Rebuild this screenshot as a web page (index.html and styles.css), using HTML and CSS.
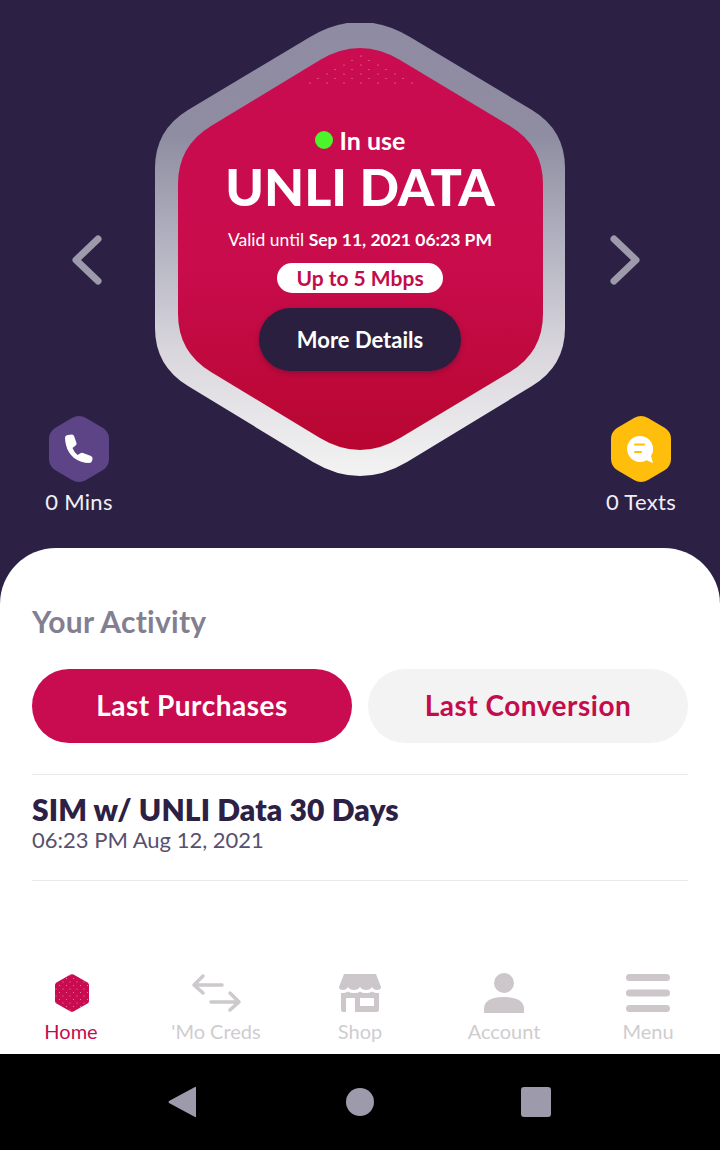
FILE: index.html
```html
<!DOCTYPE html>
<html lang="en">
<head>
<meta charset="utf-8">
<title>Home</title>
<link rel="stylesheet" href="styles.css">
</head>
<body>
<div class="phone">
  <section class="hero">
    <div class="side side-left">
      <svg class="chevron" viewBox="0 0 30 50" aria-hidden="true"><path d="M26 4 L4 25 L26 46"/></svg>
      <div class="stat">
        <svg class="stat-icon" viewBox="0 0 62 68" aria-hidden="true">
          <path class="hex-purple" d="M24 3 Q31 -1 38 3 L55 13 Q61 17 61 24 L61 44 Q61 51 55 55 L38 65 Q31 69 24 65 L7 55 Q1 51 1 44 L1 24 Q1 17 7 13 Z"/>
          <path class="glyph-white" d="M17 22 Q18 20 20 20 L24 19.500 Q25.500 19.500 26 21 L28.500 28 Q29 30 27 31 L24.500 33 Q26 37 29.500 40 L32 38.500 Q33.500 37.500 35 38 L43 41 Q45 42 44.500 44 L44 46 Q43.500 48 41 48 Q33 48 26 43 Q20 38 18 30 Q17 26 17 22 Z"/>
        </svg>
        <span class="stat-label">0 Mins</span>
      </div>
    </div>

    <div class="hex">
      <svg class="hex-art" viewBox="155 23 410 453" aria-hidden="true">
        <defs>
          <linearGradient id="rim" x1="0" y1="0" x2="0" y2="1">
            <stop offset="0" stop-color="#8f8ba4"/>
            <stop offset="0.25" stop-color="#8f8da1"/>
            <stop offset="0.5" stop-color="#b4b4c2"/>
            <stop offset="0.72" stop-color="#d8d6dc"/>
            <stop offset="1" stop-color="#f4f3f3"/>
          </linearGradient>
          <linearGradient id="core" x1="0" y1="0" x2="0" y2="1">
            <stop offset="0" stop-color="#ca0c50"/>
            <stop offset="0.55" stop-color="#c80c4c"/>
            <stop offset="1" stop-color="#b80630"/>
          </linearGradient>
          <pattern id="sparkle" width="17" height="9" patternUnits="userSpaceOnUse">
            <circle cx="4" cy="2" r="0.6" fill="#f4a0bd"/>
            <circle cx="12" cy="6.500" r="0.6" fill="#f08aae"/>
          </pattern>
        </defs>
        <path fill="url(#rim)" d="M310 37 Q360 7 410 37 L532 110 Q565 130 565 168 L565 328 Q565 366 532 386 L407 462 Q360 490 313 462 L188 386 Q155 366 155 328 L155 168 Q155 130 188 110 Z"/>
        <path fill="url(#core)" d="M320 60 Q360 36 400 60 L510 126 Q543 146 543 184 L543 314 Q543 352 510 372 L400 438 Q360 462 320 438 L211 372 Q178 352 178 314 L178 184 Q178 146 211 126 Z"/>
        <path fill="url(#sparkle)" d="M360 50 L420 86 L300 86 Z"/>
      </svg>
      <div class="hex-body">
        <p class="status"><span class="status-dot"></span>In use</p>
        <h1 class="plan">UNLI DATA</h1>
        <p class="valid">Valid until <b>Sep 11, 2021 06:23 PM</b></p>
        <span class="speed">Up to 5 Mbps</span>
        <button class="details">More Details</button>
      </div>
    </div>

    <div class="side side-right">
      <svg class="chevron" viewBox="0 0 30 50" aria-hidden="true"><path d="M4 4 L26 25 L4 46"/></svg>
      <div class="stat">
        <svg class="stat-icon" viewBox="0 0 62 68" aria-hidden="true">
          <path class="hex-yellow" d="M24 3 Q31 -1 38 3 L55 13 Q61 17 61 24 L61 44 Q61 51 55 55 L38 65 Q31 69 24 65 L7 55 Q1 51 1 44 L1 24 Q1 17 7 13 Z"/>
          <path class="glyph-white" d="M30 21 A13 13 0 0 1 41 41 L43 48 L36.500 45.300 A13 13 0 1 1 30 21 Z"/>
          <path class="chat-line" d="M25 29.500 H34 M25 37 H31"/>
        </svg>
        <span class="stat-label">0 Texts</span>
      </div>
    </div>
  </section>

  <main class="panel">
    <h2 class="panel-title">Your Activity</h2>
    <div class="tabs">
      <button class="tab tab-active">Last Purchases</button>
      <button class="tab">Last Conversion</button>
    </div>
    <article class="purchase">
      <h3 class="purchase-name">SIM w/ UNLI Data 30 Days</h3>
      <p class="purchase-date">06:23 PM Aug 12, 2021</p>
    </article>
    <nav class="tabbar">
      <a class="nav-item nav-active">
        <svg class="nav-icon" viewBox="0 0 48 40" aria-hidden="true">
          <defs>
            <pattern id="homedots" width="7" height="7" patternUnits="userSpaceOnUse">
              <circle cx="2" cy="2" r="0.5" fill="#f59ab9"/>
              <circle cx="5.500" cy="5.500" r="0.5" fill="#f59ab9"/>
            </pattern>
          </defs>
          <path class="fill-crimson" d="M23.500 1.500 Q25 0.800 26.500 1.500 L40.500 9.500 Q42 10.500 42 12 L42 28 Q42 29.500 40.500 30.500 L26.500 38.500 Q25 39.200 23.500 38.500 L9.500 30.500 Q8 29.500 8 28 L8 12 Q8 10.500 9.500 9.500 Z"/>
          <path fill="url(#homedots)" d="M23.500 1.500 Q25 0.800 26.500 1.500 L40.500 9.500 Q42 10.500 42 12 L42 28 Q42 29.500 40.500 30.500 L26.500 38.500 Q25 39.200 23.500 38.500 L9.500 30.500 Q8 29.500 8 28 L8 12 Q8 10.500 9.500 9.500 Z"/>
        </svg>
        <span>Home</span>
      </a>
      <a class="nav-item">
        <svg class="nav-icon" viewBox="0 0 48 40" aria-hidden="true">
          <path class="nav-stroke" d="M30 12 H2 M11 3 L2 12 L11 20 M19 29 H47 M38 20 L47 29 L38 37"/>
        </svg>
        <span>'Mo Creds</span>
      </a>
      <a class="nav-item">
        <svg class="nav-icon" viewBox="0 0 48 40" aria-hidden="true">
          <path class="nav-fill" d="M8 1 H40 L45 14 Q45 17 41 17 Q37.500 17 36 14 Q34.500 17 30 17 Q26 17 24 14 Q22 17 18 17 Q13.500 17 12 14 Q10.500 17 7 17 Q3 17 3 14 Z"/>
          <path class="nav-fill" fill-rule="evenodd" d="M5 20 Q9 20.500 12 18.500 Q15 20.500 18 20 Q21.500 20.500 24 18.500 Q27 20.500 30 20 Q33 20.500 36 18.500 Q39 20.500 43 20 V37 Q43 39 41 39 H7 Q5 39 5 37 Z M10 25 V39 H19 V25 Z M24 25 V33 H38 V25 Z"/>
        </svg>
        <span>Shop</span>
      </a>
      <a class="nav-item">
        <svg class="nav-icon" viewBox="0 0 48 40" aria-hidden="true">
          <circle class="nav-fill" cx="24" cy="10" r="10"/>
          <path class="nav-fill" d="M4 40 V36 Q4 24 24 24 Q44 24 44 36 V40 Z"/>
        </svg>
        <span>Account</span>
      </a>
      <a class="nav-item">
        <svg class="nav-icon" viewBox="0 0 48 40" aria-hidden="true">
          <path class="nav-bar" d="M5.500 4.500 H42.500 M5.500 20 H42.500 M5.500 35.500 H42.500"/>
        </svg>
        <span>Menu</span>
      </a>
    </nav>
  </main>

  <footer class="sysbar">
    <svg class="sys-icon sys-back" viewBox="0 0 28 32" aria-hidden="true"><path d="M27 1 Q28 0 28 2 V30 Q28 32 27 31 L1 17 Q0 16 1 15 Z"/></svg>
    <span class="sys-home"></span>
    <span class="sys-recent"></span>
  </footer>
</div>
</body>
</html>
```

FILE: styles.css
```css
* { box-sizing: border-box; }

html, body {
  margin: 0;
  padding: 0;
}

body {
  width: 720px;
  height: 1150px;
  overflow: hidden;
  font-family: "Lato", "Open Sans", sans-serif;
  background: #2c2144;
}

.phone {
  display: flex;
  flex-direction: column;
  width: 720px;
  height: 1150px;
}

/* hero */
.hero {
  display: flex;
  height: 548px;
  padding-top: 23px;
  flex: none;
}

.side {
  display: flex;
  flex-direction: column;
  width: 155px;
  flex: none;
  padding-top: 212px;
}

.chevron {
  width: 30px;
  height: 50px;
  fill: none;
  stroke: #9d9bab;
  stroke-width: 7;
  stroke-linecap: round;
  stroke-linejoin: round;
}

.side-left .chevron { margin-left: 72px; }
.side-right .chevron { margin-left: 45px; }

.stat {
  display: flex;
  flex-direction: column;
  align-items: center;
  width: 150px;
  margin-top: 130px;
}

.side-left .stat { margin-left: 4px; }
.side-right .stat { margin-left: 1px; }

.stat-icon {
  width: 62px;
  height: 68px;
  display: block;
}

.stat-label {
  margin-top: 5px;
  font-size: 22px;
  line-height: 28px;
  letter-spacing: .3px;
  color: #f1eff5;
}

.hex-purple { fill: #5c4486; }
.hex-yellow { fill: #ffbe0b; }
.glyph-white { fill: #fff; }

.chat-line {
  fill: none;
  stroke: #ffbe0b;
  stroke-width: 2;
  stroke-linecap: round;
}

.hex {
  position: relative;
  width: 410px;
  height: 453px;
  flex: none;
}

.hex-art {
  position: absolute;
  inset: 0;
  width: 410px;
  height: 453px;
}

.hex-body {
  position: relative;
  display: flex;
  flex-direction: column;
  align-items: center;
  padding-top: 102px;
  color: #fff;
}

.status {
  display: flex;
  align-items: center;
  gap: 7px;
  margin: 0;
  height: 30px;
  font-size: 25px;
  line-height: 30px;
  font-weight: 700;
}

.status-dot {
  width: 18px;
  height: 18px;
  border-radius: 50%;
  background: #4cf42c;
}

.plan {
  margin: 0;
  height: 62px;
  font-size: 52px;
  line-height: 62px;
  font-weight: 900;
  letter-spacing: 0;
}

.valid {
  margin: 11px 0 0;
  font-size: 17.500px;
  line-height: 24px;
}

.valid b { font-weight: 700; }

.speed {
  display: flex;
  align-items: center;
  justify-content: center;
  width: 166px;
  height: 30px;
  margin-top: 11px;
  border-radius: 15px;
  background: #fff;
  color: #c20c4c;
  font-size: 21px;
  line-height: 26px;
  font-weight: 700;
}

.details {
  width: 202px;
  height: 63px;
  margin-top: 15px;
  border: 0;
  border-radius: 32px;
  background: #2a1f3e;
  color: #fff;
  font-family: inherit;
  font-size: 22px;
  font-weight: 700;
  box-shadow: 0 2px 5px rgba(40, 20, 50, .35);
}

/* panel */
.panel {
  display: flex;
  flex-direction: column;
  flex: 1;
  padding: 0 32px;
  background: #fff;
  border-radius: 56px 56px 0 0;
}

.panel-title {
  margin: 55px 0 0;
  font-size: 30px;
  line-height: 36px;
  letter-spacing: .25px;
  font-weight: 700;
  color: #827f92;
}

.tabs {
  display: grid;
  grid-template-columns: 1fr 1fr;
  gap: 16px;
  margin-top: 30px;
}

.tab {
  height: 74px;
  padding: 0 0 3px;
  border: 0;
  border-radius: 37px;
  background: #f3f3f4;
  color: #c40c4c;
  font-family: inherit;
  font-size: 28px;
  letter-spacing: .5px;
  font-weight: 700;
}

.tab-active {
  background: #c90c4f;
  color: #fff;
}

.purchase {
  display: flex;
  flex-direction: column;
  height: 107px;
  margin-top: 31px;
  padding-top: 16px;
  border-top: 1px solid #e9e9ea;
  border-bottom: 1px solid #e9e9ea;
}

.purchase-name {
  margin: 0;
  font-size: 30px;
  line-height: 36px;
  letter-spacing: .12px;
  font-weight: 800;
  color: #2c2144;
}

.purchase-date {
  margin: 0;
  font-size: 22px;
  line-height: 25px;
  color: #57506f;
}

.tabbar {
  display: grid;
  grid-template-columns: repeat(5, 144px);
  margin: auto -32px 0;
  height: 81px;
}

.nav-item {
  display: flex;
  flex-direction: column;
  align-items: center;
  font-size: 20px;
  line-height: 24px;
  color: #cfccd0;
}

.nav-item span { margin-top: 6px; }

.nav-active { color: #c20c4c; }
.nav-item:first-child { padding-right: 2px; }

.nav-icon {
  width: 48px;
  height: 40px;
  display: block;
  overflow: visible;
}

.fill-crimson { fill: #c90c4f; }
.nav-fill { fill: #cdc7cc; }

.nav-stroke {
  fill: none;
  stroke: #cdc9cc;
  stroke-width: 3.500;
  stroke-linecap: round;
  stroke-linejoin: round;
}

.nav-bar {
  fill: none;
  stroke: #cdc7cc;
  stroke-width: 7;
  stroke-linecap: round;
}

/* system bar */
.sysbar {
  display: flex;
  align-items: center;
  height: 96px;
  flex: none;
  padding-left: 168px;
  background: #000;
}

.sys-back {
  width: 28px;
  height: 32px;
  fill: #9c9aab;
}

.sys-home {
  width: 28px;
  height: 28px;
  margin-left: 150px;
  border-radius: 50%;
  background: #9c9aab;
}

.sys-recent {
  width: 30px;
  height: 30px;
  margin-left: 147px;
  border-radius: 3px;
  background: #9c9aab;
}
```
